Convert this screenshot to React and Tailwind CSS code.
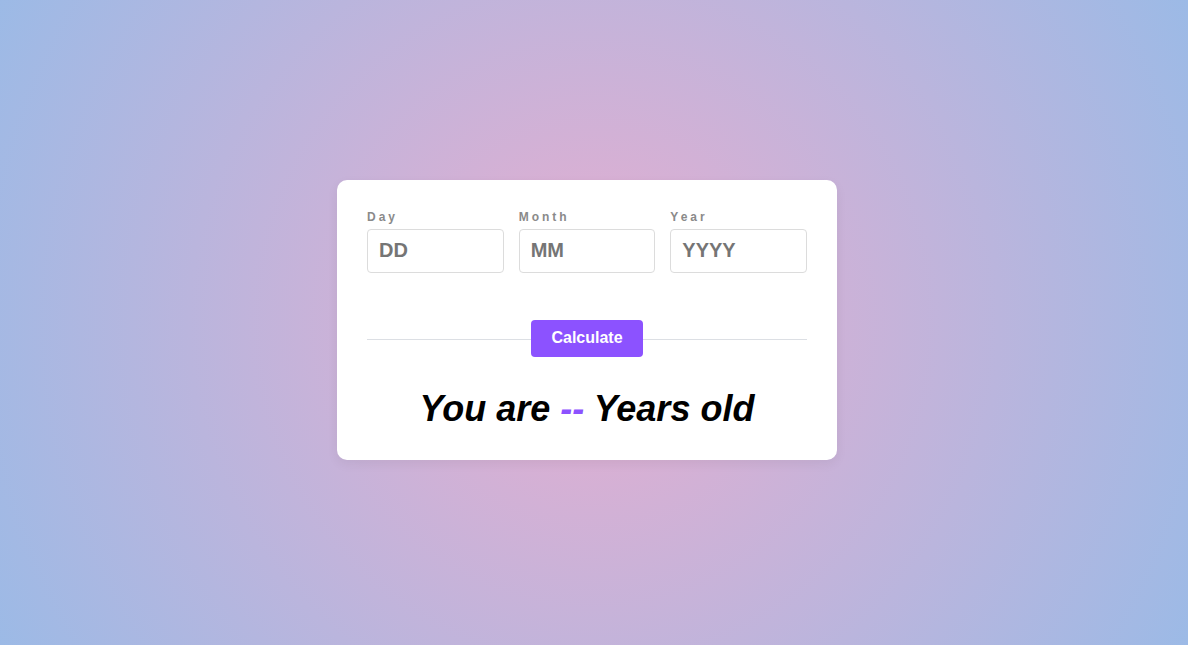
export default function App() {
  const fields = [
    { label: 'Day', ph: 'DD' },
    { label: 'Month', ph: 'MM' },
    { label: 'Year', ph: 'YYYY' },
  ]

  return (
    <div className="flex h-[645px] w-full items-center justify-center bg-[radial-gradient(circle,#e2aecf_0%,#d8b0d4_20%,#9cbae6_100%)] pr-[14px] pb-[6px] font-['Liberation_Sans',Arial,sans-serif]">
      <div className="w-[500px] rounded-[10px] bg-white px-[30px] pt-[30px] pb-[31px] shadow-[0_4px_12px_rgba(0,0,0,0.06)]">
        <div className="grid grid-cols-3 gap-[15px]">
          {fields.map((f) => (
            <label key={f.label} className="flex flex-col">
              <span className="h-[14px] text-[12px] leading-[14px] font-bold tracking-[0.25em] text-[#8a8a8a]">
                {f.label}
              </span>
              <input
                type="text"
                placeholder={f.ph}
                className="mt-[5px] h-[44px] w-full rounded-[4px] border border-[#dcdcdc] px-[11px] text-[20px] font-bold text-[#333] outline-none placeholder:text-[#757575]"
              />
            </label>
          ))}
        </div>

        <div className="relative mt-[47px] flex h-[37px] items-center justify-center">
          <div className="absolute inset-x-0 top-[19px] h-px bg-[#dcdfe4]" />
          <button
            type="button"
            className="relative h-[37px] w-[112px] rounded-[4px] bg-[#8c52ff] text-[16px] font-bold text-white"
          >
            Calculate
          </button>
        </div>

        <p className="mt-[31px] text-center text-[36px] leading-[41px] font-bold text-black italic">
          You are <span className="text-[#8c52ff]">--</span> Years old
        </p>
      </div>
    </div>
  )
}
